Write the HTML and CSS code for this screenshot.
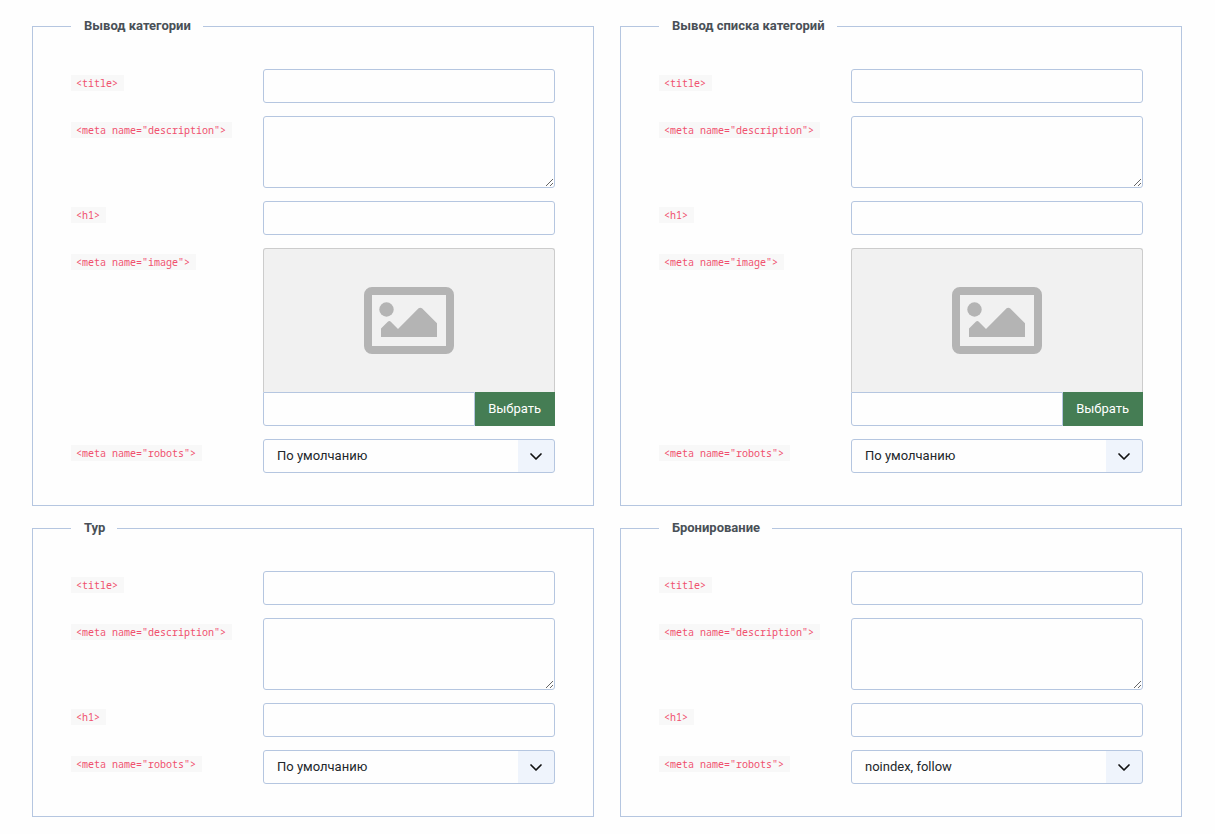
FILE: index.html
```html
<!DOCTYPE html>
<html lang="ru">
<head>
<meta charset="utf-8">
<title>SEO</title>
<link rel="stylesheet" href="styles.css">
</head>
<body>
<svg class="sprite" aria-hidden="true">
  <symbol id="picture" viewBox="0 0 90 67">
    <rect x="4" y="4" width="82" height="59" rx="4" fill="none" stroke="currentColor" stroke-width="8"/>
    <circle cx="22.5" cy="22.5" r="7.2" fill="currentColor"/>
    <path d="M17 50v-8.500l6.800-6.800q1.500-1.300 3 0l7.200 7.200 20.600-20.600q1.700-1.300 3.400 0L73 36.300V50z" fill="currentColor"/>
  </symbol>
</svg>
<form class="grid">
  <fieldset class="group">
    <legend>Вывод категории</legend>
    <div class="fields">
      <div class="field"><label for="c-title"><code>&lt;title&gt;</code></label><input class="control" id="c-title" type="text"></div>
      <div class="field"><label for="c-desc"><code>&lt;meta name="description"&gt;</code></label><textarea class="control area" id="c-desc"></textarea></div>
      <div class="field"><label for="c-h1"><code>&lt;h1&gt;</code></label><input class="control" id="c-h1" type="text"></div>
      <div class="field"><label for="c-image"><code>&lt;meta name="image"&gt;</code></label>
        <div class="media">
          <div class="preview"><svg class="picture" aria-hidden="true"><use href="#picture"/></svg></div>
          <div class="picker"><input class="control" id="c-image" type="text"><button class="choose" type="button">Выбрать</button></div>
        </div>
      </div>
      <div class="field"><label for="c-robots"><code>&lt;meta name="robots"&gt;</code></label><select class="control select" id="c-robots"><option>По умолчанию</option><option>noindex, follow</option></select></div>
    </div>
  </fieldset>
  <fieldset class="group">
    <legend>Вывод списка категорий</legend>
    <div class="fields">
      <div class="field"><label for="l-title"><code>&lt;title&gt;</code></label><input class="control" id="l-title" type="text"></div>
      <div class="field"><label for="l-desc"><code>&lt;meta name="description"&gt;</code></label><textarea class="control area" id="l-desc"></textarea></div>
      <div class="field"><label for="l-h1"><code>&lt;h1&gt;</code></label><input class="control" id="l-h1" type="text"></div>
      <div class="field"><label for="l-image"><code>&lt;meta name="image"&gt;</code></label>
        <div class="media">
          <div class="preview"><svg class="picture" aria-hidden="true"><use href="#picture"/></svg></div>
          <div class="picker"><input class="control" id="l-image" type="text"><button class="choose" type="button">Выбрать</button></div>
        </div>
      </div>
      <div class="field"><label for="l-robots"><code>&lt;meta name="robots"&gt;</code></label><select class="control select" id="l-robots"><option>По умолчанию</option><option>noindex, follow</option></select></div>
    </div>
  </fieldset>
  <fieldset class="group">
    <legend>Тур</legend>
    <div class="fields">
      <div class="field"><label for="t-title"><code>&lt;title&gt;</code></label><input class="control" id="t-title" type="text"></div>
      <div class="field"><label for="t-desc"><code>&lt;meta name="description"&gt;</code></label><textarea class="control area" id="t-desc"></textarea></div>
      <div class="field"><label for="t-h1"><code>&lt;h1&gt;</code></label><input class="control" id="t-h1" type="text"></div>
      <div class="field"><label for="t-robots"><code>&lt;meta name="robots"&gt;</code></label><select class="control select" id="t-robots"><option>По умолчанию</option><option>noindex, follow</option></select></div>
    </div>
  </fieldset>
  <fieldset class="group">
    <legend>Бронирование</legend>
    <div class="fields">
      <div class="field"><label for="b-title"><code>&lt;title&gt;</code></label><input class="control" id="b-title" type="text"></div>
      <div class="field"><label for="b-desc"><code>&lt;meta name="description"&gt;</code></label><textarea class="control area" id="b-desc"></textarea></div>
      <div class="field"><label for="b-h1"><code>&lt;h1&gt;</code></label><input class="control" id="b-h1" type="text"></div>
      <div class="field"><label for="b-robots"><code>&lt;meta name="robots"&gt;</code></label><select class="control select" id="b-robots"><option>По умолчанию</option><option selected>noindex, follow</option></select></div>
    </div>
  </fieldset>
</form>
</body>
</html>
```
FILE: styles.css
```css
* {
  box-sizing: border-box;
}

body {
  margin: 0;
  padding: 16px 33px 16px 32px;
  background: #fefefe;
  color: #22262a;
  font: 13px/20px Roboto, sans-serif;
}

.sprite {
  display: none;
}

.grid {
  display: grid;
  grid-template-columns: repeat(2, minmax(0, 1fr));
  gap: 12px 26px;
}

.group {
  min-width: 0;
  margin: 0;
  padding: 33px 38px 32px;
  border: 1px solid #b5c6e0;
}

legend {
  padding: 0 12px 0 13px;
  color: #495057;
  font-weight: 700;
}

.fields {
  display: flex;
  flex-direction: column;
  gap: 13px;
}

.field {
  display: grid;
  grid-template-columns: 192px minmax(0, 1fr);
  align-items: start;
}

.field label {
  display: flex;
  padding-top: 6px;
}

code {
  padding: 0 6px 0 5px;
  background: #f8f8f8;
  color: #f0506e;
  font: 10px/16px "Noto Sans Mono", "DejaVu Sans Mono", monospace;
  white-space: nowrap;
}

.control {
  display: block;
  width: 100%;
  height: 34px;
  margin: 0;
  padding: 0 13px;
  border: 1px solid #b5c6e0;
  border-radius: 3px;
  background: #fefefe;
  color: inherit;
  font: inherit;
}

.area {
  height: 72px;
  padding: 6px 13px;
  resize: vertical;
}

.select {
  appearance: none;
  padding-right: 48px;
  background:
    url("data:image/svg+xml,%3Csvg xmlns='http://www.w3.org/2000/svg' width='36' height='32' fill='none' stroke='%23111' stroke-width='1.7' stroke-linecap='round' stroke-linejoin='round'%3E%3Cpath d='M13 14l5 5 5-5'/%3E%3C/svg%3E") right / 36px 32px no-repeat,
    linear-gradient(#eff4fc, #eff4fc) right / 36px 100% no-repeat,
    #fefefe;
}

.preview {
  display: flex;
  align-items: center;
  justify-content: center;
  height: 144px;
  border: 1px solid #ccc;
  border-bottom: 0;
  border-radius: 3px 3px 0 0;
  background: #f1f1f1;
  color: #b4b4b4;
}

.picture {
  width: 90px;
  height: 67px;
}

.picker {
  display: flex;
}

.picker .control {
  flex: 1;
  min-width: 0;
  border-radius: 0 0 0 3px;
}

.choose {
  padding: 0 14px 0 13px;
  border: 0;
  background: #457d54;
  color: #fff;
  font: inherit;
}
```
